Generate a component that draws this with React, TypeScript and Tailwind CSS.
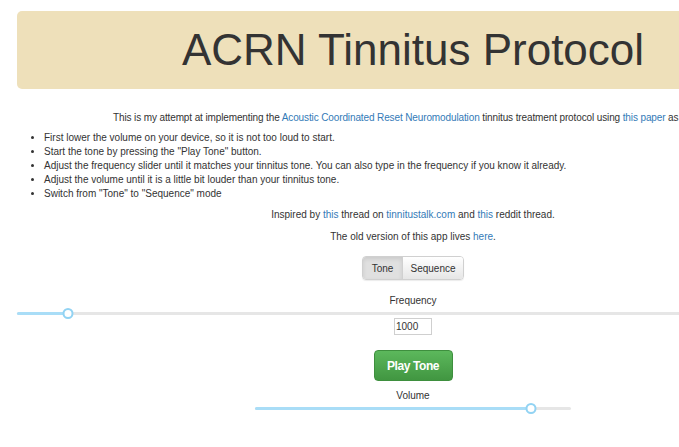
const font = { fontFamily: '"Liberation Sans", Arial, sans-serif' };

function Slider({ width, fill }: { width: string; fill: number }) {
  return (
    <div className={`relative h-[10px] ${width}`}>
      <div className="absolute left-0 right-0 top-[4px] h-[3px] rounded-full bg-[#e6e6e6]" />
      <div
        className="absolute left-0 top-[4px] h-[3px] rounded-full bg-[#a9ddf7]"
        style={{ width: `${fill}px` }}
      />
      <div
        className="absolute top-0 h-[11px] w-[11px] -translate-x-1/2 rounded-full border-2 border-[#92d3f3] bg-white"
        style={{ left: `${fill}px` }}
      />
    </div>
  );
}

export default function App() {
  return (
    <div className="h-[447px] w-[679px] overflow-hidden bg-white text-[#333]" style={font}>
      <div className="w-[826px] px-[17px] pt-[11px]">
        <div className="flex h-[78px] items-center justify-center rounded-[5px] bg-[#eee0ba]">
          <h1 className="text-[44px] leading-none text-[#333]">ACRN Tinnitus Protocol</h1>
        </div>

        <p className="mt-[22px] whitespace-nowrap pl-[96px] text-[10px] leading-[14px] tracking-[-0.12px]">
          This is my attempt at implementing the{" "}
          <a className="text-[#337ab7]">Acoustic Coordinated Reset Neuromodulation</a> tinnitus treatment
          protocol using <a className="text-[#337ab7]">this paper</a> as a guide.
        </p>

        <ul className="mt-[6px] list-disc pl-[27px] text-[10px] leading-[14px]">
          <li>First lower the volume on your device, so it is not too loud to start.</li>
          <li>Start the tone by pressing the "Play Tone" button.</li>
          <li>
            Adjust the frequency slider until it matches your tinnitus tone. You can also type in the frequency if
            you know it already.
          </li>
          <li>Adjust the volume until it is a little bit louder than your tinnitus tone.</li>
          <li>Switch from "Tone" to "Sequence" mode</li>
        </ul>

        <p className="mt-[7px] text-center text-[10px] leading-[14px]">
          Inspired by <a className="text-[#337ab7]">this</a> thread on{" "}
          <a className="text-[#337ab7]">tinnitustalk.com</a> and <a className="text-[#337ab7]">this</a> reddit
          thread.
        </p>
        <p className="mt-[8px] text-center text-[10px] leading-[14px]">
          The old version of this app lives <a className="text-[#337ab7]">here</a>.
        </p>

        <div className="mt-[12px] flex justify-center">
          <div className="flex h-[24px] overflow-hidden rounded-[4px] border border-[#d0d0d0] text-[10px] shadow-[0_1px_1px_rgba(0,0,0,0.08)]">
            <button className="w-[39px] bg-[#e0e0e0] text-[#333] shadow-[inset_0_2px_4px_rgba(0,0,0,0.1)]">
              Tone
            </button>
            <button className="w-[61px] border-l border-[#d0d0d0] bg-gradient-to-b from-white to-[#e6e6e6] text-[#333]">
              Sequence
            </button>
          </div>
        </div>

        <p className="mt-[14px] text-center text-[10px] leading-[14px]">Frequency</p>
        <Slider width="w-full" fill={51} />
        <div className="flex justify-center">
          <input
            readOnly
            value="1000"
            className="h-[17px] w-[38px] border border-[#cfcfcf] px-[1px] text-[10px] text-[#333] outline-none"
            style={font}
          />
        </div>

        <div className="mt-[15px] flex justify-center">
          <button className="h-[31px] w-[79px] rounded-[4px] border border-[#3e8f3e] bg-gradient-to-b from-[#5cb85c] to-[#419641] text-[12px] font-bold tracking-[-0.4px] text-white">
            Play Tone
          </button>
        </div>

        <p className="mt-[8px] text-center text-[10px] leading-[14px]">Volume</p>
        <div className="flex justify-center">
          <Slider width="w-[316px]" fill={276} />
        </div>
      </div>
    </div>
  );
}
